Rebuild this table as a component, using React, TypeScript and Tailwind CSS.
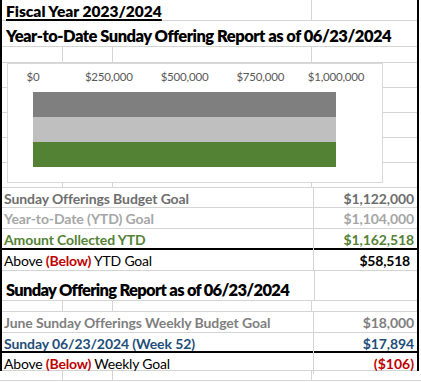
import React from 'react';

const line = 'border-[#d4d4d4]';

const ticks = [
  { label: '$0', x: 25 },
  { label: '$250,000', x: 100.75 },
  { label: '$500,000', x: 176.5 },
  { label: '$750,000', x: 252.25 },
  { label: '$1,000,000', x: 328 },
];

// Empty spreadsheet row: cells A | B | C | D
const EmptyRow = ({ h, first = 'grid-cols-[61px_50px_199px_102px]' }: { h: string; first?: string }) => (
  <div className={`grid ${first} ${h} border-b ${line}`}>
    <div className={`border-r ${line}`} />
    <div className={`border-r ${line}`} />
    <div className={`border-r ${line}`} />
    <div />
  </div>
);

const DataRow = ({
  label,
  value,
  cls,
  valueCls,
  h = 'h-[20px]',
  thick = false,
}: {
  label: React.ReactNode;
  value: React.ReactNode;
  cls: string;
  valueCls?: string;
  h?: string;
  thick?: boolean;
}) => (
  <div
    className={`grid grid-cols-[312px_102px] ${h} ${
      thick ? 'border-b-2 border-black' : `border-b ${line}`
    }`}
  >
    <div className={`border-r ${line} flex items-center pl-[2px] whitespace-nowrap ${cls}`}>{label}</div>
    <div className={`flex items-center justify-end pr-[2px] whitespace-nowrap ${valueCls ?? cls}`}>{value}</div>
  </div>
);

const Chart = () => (
  <div className="absolute left-[5px] top-0 w-[376px] h-[120px] bg-white border border-[#d9d9d9]">
    <div className="relative h-[28px]">
      {ticks.map((t) => (
        <span
          key={t.label}
          className="absolute top-[4px] -translate-x-1/2 text-[11.5px] text-[#595959] tracking-[-0.2px]"
          style={{ left: t.x }}
        >
          {t.label}
        </span>
      ))}
    </div>
    <div className="pl-[25px]">
      <div className="w-[303px] h-[25px] bg-[#7f7f7f]" />
      <div className="w-[303px] h-[25px] bg-[#bfbfbf]" />
      <div className="w-[303px] h-[25px] bg-[#548235]" />
    </div>
  </div>
);

const App = () => {
  return (
    <div className="w-[421px] h-[382px] bg-white overflow-hidden font-['Lato',sans-serif] text-[14px] text-black">
      <div className="w-[419px] border-x-2 border-black">
        {/* Fiscal year */}
        <div className={`grid grid-cols-[310px_102px] h-[21px] border-b ${line}`}>
          <div className={`border-r ${line} flex items-end pb-[1px] pl-[4px]`}>
            <span className="font-extrabold text-[15.5px] underline underline-offset-[2px] decoration-[1.5px] leading-none whitespace-nowrap">
              Fiscal Year 2023/2024
            </span>
          </div>
          <div />
        </div>
        {/* Title */}
        <div className={`h-[26px] border-b ${line} flex items-end pb-[2px] pl-[4px] whitespace-nowrap`}>
          <span className="font-extrabold text-[16.5px] tracking-[-0.5px] leading-none">
            Year-to-Date Sunday Offering Report as of 06/23/2024
          </span>
        </div>
        <EmptyRow h="h-[16px]" />
        {/* Chart area */}
        <div className="relative">
          <EmptyRow h="h-[25px]" />
          <EmptyRow h="h-[25px]" />
          <EmptyRow h="h-[25px]" />
          <EmptyRow h="h-[25px]" />
          <EmptyRow h="h-[25px]" />
          <Chart />
        </div>
        {/* YTD figures */}
        <div className="text-[14px] font-bold tracking-[-0.1px]">
          <DataRow label="Sunday Offerings Budget Goal" value="$1,122,000" cls="text-[#6e6e6e]" />
          <DataRow label="Year-to-Date (YTD) Goal" value="$1,104,000" cls="text-[#a6a6a6]" h="h-[21px]" />
          <DataRow label="Amount Collected YTD" value="$1,162,518" cls="text-[#548235]" h="h-[21px]" thick />
        </div>
        <DataRow
          label={
            <span className="font-normal">
              Above <span className="font-bold text-[#c00000]">(Below)</span> YTD Goal
            </span>
          }
          value={<span className="pr-[4px]">$58,518</span>}
          cls="tracking-[-0.2px]"
          valueCls="font-bold tracking-[-0.2px]"
          h="h-[21px]"
        />
        <div className={`h-[30px] border-b ${line} grid grid-cols-[312px_102px]`}>
          <div className="flex items-end pb-[2px] pl-[4px] whitespace-nowrap">
            <span className="font-extrabold text-[16.5px] tracking-[-0.7px] leading-none">
              Sunday Offering Report as of 06/23/2024
            </span>
          </div>
          <div className={`border-l ${line}`} />
        </div>
        <EmptyRow h="h-[11px]" />
        <div className="font-bold tracking-[-0.1px]">
          <DataRow label="June Sunday Offerings Weekly Budget Goal" value="$18,000" cls="text-[#7f7f7f]" h="h-[21px]" />
          <DataRow label="Sunday 06/23/2024 (Week 52)" value="$17,894" cls="text-[#1f4e79]" thick />
        </div>
        <DataRow
          label={
            <span className="font-normal">
              Above <span className="font-bold text-[#c00000]">(Below)</span> Weekly Goal
            </span>
          }
          value="($106)"
          cls="tracking-[-0.2px]"
          valueCls="font-bold text-[#c00000]"
          h="h-[18px]"
        />
      </div>
      <EmptyRow h="h-[10px]" first="grid-cols-[63px_50px_199px_102px]" />
    </div>
  );
};

export default App;
